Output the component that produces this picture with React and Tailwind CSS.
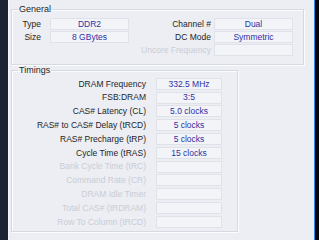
import React from 'react';

const font = { fontFamily: '"Liberation Sans", Arial, sans-serif' };

const ValueBox = ({ children, className = '' }) => (
  <div
    className={`flex items-center justify-center border border-[#dfe2e9] bg-[#f2f4f8] text-[#3030a6] ${className}`}
  >
    {children}
  </div>
);

const timings = [
  { label: 'DRAM Frequency', value: '332.5 MHz' },
  { label: 'FSB:DRAM', value: '3:5' },
  { label: 'CAS# Latency (CL)', value: '5.0 clocks' },
  { label: 'RAS# to CAS# Delay (tRCD)', value: '5 clocks' },
  { label: 'RAS# Precharge (tRP)', value: '5 clocks' },
  { label: 'Cycle Time (tRAS)', value: '15 clocks' },
  { label: 'Bank Cycle Time (tRC)', value: '', off: true },
  { label: 'Command Rate (CR)', value: '', off: true },
  { label: 'DRAM Idle Timer', value: '', off: true },
  { label: 'Total CAS# (tRDRAM)', value: '', off: true },
  { label: 'Row To Column (tRCD)', value: '', off: true },
];

export default function App() {
  return (
    <div className="flex w-[319px] h-[240px] overflow-hidden text-[8.5px] leading-none text-[#1e1e1e]" style={font}>
      <div className="w-[8px] h-full bg-[#1c2333]" />
      <div className="flex-1 h-full bg-[#eceef3] pl-[2px] pt-[5px] border-l border-[#f7f8fb]">
        <fieldset className="w-[293px] h-[60px] border border-[#d5d9e1] shadow-[inset_1px_1px_0_#fbfcfd,1px_1px_0_#fbfcfd] px-[6px]">
          <legend className="px-[1px] text-[9px]">General</legend>
          <div className="flex mt-[4px]">
            <div className="flex flex-col gap-[1px]">
              <div className="flex h-[12px] items-center">
                <span className="w-[23px] text-right">Type</span>
                <ValueBox className="ml-[9px] w-[79px] h-[12px]">DDR2</ValueBox>
              </div>
              <div className="flex h-[12px] items-center">
                <span className="w-[23px] text-right">Size</span>
                <ValueBox className="ml-[9px] w-[79px] h-[12px]">8 GBytes</ValueBox>
              </div>
            </div>
            <div className="flex flex-col gap-[1px] ml-auto mr-[4px]">
              <div className="flex h-[12px] items-center">
                <span className="w-[80px] text-right">Channel #</span>
                <ValueBox className="ml-[3px] w-[79px] h-[12px]">Dual</ValueBox>
              </div>
              <div className="flex h-[12px] items-center">
                <span className="w-[80px] text-right">DC Mode</span>
                <ValueBox className="ml-[3px] w-[79px] h-[12px]">Symmetric</ValueBox>
              </div>
              <div className="flex h-[12px] items-center">
                <span className="w-[80px] text-right text-[#c9cdd6]">Uncore Frequency</span>
                <ValueBox className="ml-[3px] w-[79px] h-[12px]" />
              </div>
            </div>
          </div>
        </fieldset>
        <fieldset className="mt-[1px] w-[227px] h-[166px] border border-[#d5d9e1] shadow-[inset_1px_1px_0_#fbfcfd,1px_1px_0_#fbfcfd] px-[6px]">
          <legend className="px-[1px] text-[9px]">Timings</legend>
          <div className="flex flex-col mt-[2px]">
            {timings.map((t) => (
              <div key={t.label} className="flex h-[13.8px] items-center">
                <span className={`w-[128px] text-right ${t.off ? 'text-[#c9cdd6]' : ''}`}>{t.label}</span>
                <ValueBox className="ml-[10px] w-[66px] h-[12px]">{t.value}</ValueBox>
              </div>
            ))}
          </div>
        </fieldset>
      </div>
      <div className="w-[2px] h-full bg-[#eceef3]" />
      <div className="w-[1px] h-full bg-[#2f8fe6]" />
      <div className="w-[4px] h-full bg-[#050608]" />
    </div>
  );
}
